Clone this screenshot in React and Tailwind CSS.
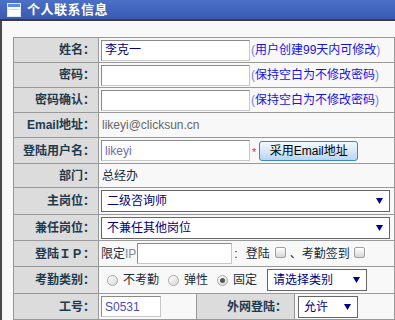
import React from "react";

// small window icon used in the panel title
const PanelIcon = () => (
  <svg width="14" height="14" viewBox="0 0 14 14">
    <rect x="0.5" y="0.5" width="13" height="13" fill="#ffffff" stroke="#dfe8f7" />
    <rect x="1" y="1" width="12" height="3" fill="#5b8de0" />
    <rect x="2" y="6" width="10" height="1" fill="#c6d6f0" />
  </svg>
);

const Arrow = () => (
  <svg width="7" height="6" viewBox="0 0 7 6">
    <polygon points="0,0 7,0 3.5,6" fill="#000080" />
  </svg>
);

const Label = ({ children, className = "" }) => (
  <td className={`bg-[#dcdcdc] border border-[#999] text-right pr-[3px] font-bold text-[12px] text-[#1d3a4f] whitespace-nowrap ${className}`}>
    {children}
  </td>
);

const Value = ({ children, colSpan = 3, className = "" }) => (
  <td colSpan={colSpan} className={`border border-[#999] pl-[2px] text-[12px] text-[#1a2b38] whitespace-nowrap ${className}`}>
    <div className="flex items-center">{children}</div>
  </td>
);

const TextBox = ({ value = "", className = "", color = "text-[#000080]" }) => (
  <div className={`h-[21px] bg-white border border-[#8a8a8a] border-b-[#c8c8c8] border-r-[#c8c8c8] flex items-center pl-[3px] text-[12px] ${color} ${className}`}>
    {value}
  </div>
);

const Select = ({ value, className = "" }) => (
  <div className={`h-[22px] bg-white border border-[#666] flex items-center justify-between pl-[5px] pr-[6px] text-[12px] text-[#000080] ${className}`}>
    <span>{value}</span>
    <Arrow />
  </div>
);

const Hint = ({ children }) => (
  <span className="ml-[1px] text-[12px] text-[#1414e6]">
    <span className="text-[#7d7df2]">(</span>
    {children}
    <span className="text-[#7d7df2]">)</span>
  </span>
);

const Radio = ({ checked }) => (
  <span className="inline-flex items-center justify-center w-[11px] h-[11px] rounded-full border border-[#a9a9a9] bg-gradient-to-br from-[#ffffff] to-[#d8d8d8]">
    {checked && <span className="w-[5px] h-[5px] rounded-full bg-[#555]" />}
  </span>
);

const Check = () => (
  <span className="inline-block w-[11px] h-[11px] rounded-[2px] border border-[#a0a0a0] bg-gradient-to-b from-[#ffffff] to-[#d6d6d6]" />
);

export default function App() {
  return (
    <div className="w-[395px] h-[320px] overflow-hidden bg-[#f8f8f8] font-['Liberation_Sans','Noto_Sans_CJK_SC',sans-serif]">
      <div className="h-[21px] bg-gradient-to-b from-[#4c6fc7] to-[#3a5ab4] flex items-center pl-[7px] gap-[6px] border-b-2 border-[#3b3b3b]">
        <PanelIcon />
        <span className="text-white font-bold text-[13px] tracking-[0.5px]">个人联系信息</span>
      </div>
      <div className="border-l-2 border-[#4a4a4a] h-full pl-[11px] pt-[16px]">
        <table className="border-collapse w-[381px] table-fixed border border-[#666]">
          <colgroup>
            <col className="w-[85px]" />
            <col className="w-[98px]" />
            <col className="w-[98px]" />
            <col className="w-[100px]" />
          </colgroup>
          <tbody>
            <tr className="h-[25px]">
              <Label>姓名：</Label>
              <Value>
                <TextBox value="李克一" className="w-[149px]" />
                <Hint>用户创建99天内可修改</Hint>
              </Value>
            </tr>
            <tr className="h-[25px]">
              <Label>密码：</Label>
              <Value>
                <TextBox className="w-[149px]" />
                <Hint>保持空白为不修改密码</Hint>
              </Value>
            </tr>
            <tr className="h-[25px]">
              <Label>密码确认：</Label>
              <Value>
                <TextBox className="w-[149px]" />
                <Hint>保持空白为不修改密码</Hint>
              </Value>
            </tr>
            <tr className="h-[25px]">
              <Label>Email地址：</Label>
              <Value>
                <span className="text-[#666] text-[12px] pl-[1px]">likeyi@clicksun.cn</span>
              </Value>
            </tr>
            <tr className="h-[26px]">
              <Label>登陆用户名：</Label>
              <Value>
                <TextBox value="likeyi" color="text-[#6b6bb5]" className="w-[149px]" />
                <span className="text-[#e03030] text-[11px] ml-[2px] self-start mt-[4px]">*</span>
                <button className="ml-[3px] h-[20px] w-[99px] rounded-[3px] border border-[#3d86c6] bg-gradient-to-b from-[#f3f9fe] to-[#b8d6f0] text-[12px] text-black">
                  采用Email地址
                </button>
              </Value>
            </tr>
            <tr className="h-[24px]">
              <Label>部门：</Label>
              <Value>
                <span className="pl-[1px] text-[12px]">总经办</span>
              </Value>
            </tr>
            <tr className="h-[27px]">
              <Label>主岗位：</Label>
              <Value>
                <Select value="二级咨询师" className="w-[289px]" />
              </Value>
            </tr>
            <tr className="h-[26px]">
              <Label>兼任岗位：</Label>
              <Value>
                <Select value="不兼任其他岗位" className="w-[289px]" />
              </Value>
            </tr>
            <tr className="h-[26px]">
              <Label>登陆ＩＰ：</Label>
              <Value>
                <span>限定</span>
                <span className="text-[#7a8a9a]">IP</span>
                <TextBox className="w-[95px] ml-[1px]" />
                <span className="ml-[2px]">:</span>
                <span className="ml-[8px]">登陆</span>
                <span className="ml-[5px]"><Check /></span>
                <span className="ml-[4px]">、考勤签到</span>
                <span className="ml-[4px]"><Check /></span>
              </Value>
            </tr>
            <tr className="h-[27px]">
              <Label>考勤类别：</Label>
              <Value>
                <span className="ml-[6px] flex items-center"><Radio /></span>
                <span className="ml-[5px]">不考勤</span>
                <span className="ml-[9px] flex items-center"><Radio /></span>
                <span className="ml-[5px]">弹性</span>
                <span className="ml-[9px] flex items-center"><Radio checked /></span>
                <span className="ml-[5px]">固定</span>
                <Select value="请选择类别" className="w-[100px] ml-[10px]" />
              </Value>
            </tr>
            <tr className="h-[26px]">
              <Label>工号：</Label>
              <Value colSpan={1}>
                <TextBox value="S0531" color="text-[#4a4ab8]" className="w-[60px]" />
              </Value>
              <Label className="pr-[7px]">外网登陆：</Label>
              <Value colSpan={1}>
                <Select value="允许" className="w-[60px] ml-[1px] pl-[4px]" />
              </Value>
            </tr>
          </tbody>
        </table>
      </div>
    </div>
  );
}
